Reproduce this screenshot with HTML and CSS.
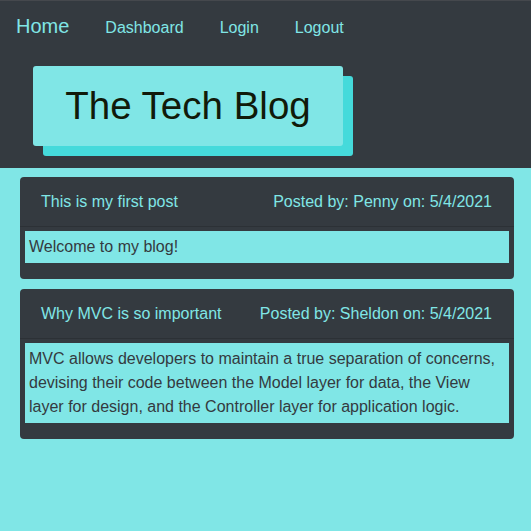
FILE: index.html
```html
<!DOCTYPE html>
<html lang="en">
<head>
<meta charset="utf-8">
<title>The Tech Blog</title>
<link rel="stylesheet" href="styles.css">
</head>
<body>
<header class="site-header">
  <nav class="nav">
    <a class="brand" href="#">Home</a>
    <a class="nav-link" href="#">Dashboard</a>
    <a class="nav-link" href="#">Login</a>
    <a class="nav-link" href="#">Logout</a>
  </nav>
  <div class="title-wrap">
    <h1 class="title">The Tech Blog</h1>
  </div>
</header>
<main class="posts">
  <article class="card">
    <div class="card-header">
      <span>This is my first post</span>
      <span>Posted by: Penny on: 5/4/2021</span>
    </div>
    <div class="card-body">
      <p class="content">Welcome to my blog!</p>
    </div>
  </article>
  <article class="card">
    <div class="card-header">
      <span>Why MVC is so important</span>
      <span>Posted by: Sheldon on: 5/4/2021</span>
    </div>
    <div class="card-body">
      <p class="content">MVC allows developers to maintain a true separation of concerns, devising their code between the Model layer for data, the View layer for design, and the Controller layer for application logic.</p>
    </div>
  </article>
</main>
</body>
</html>
```
FILE: styles.css
```css
* { box-sizing: border-box; }
html, body {
  margin: 0;
  padding: 0;
  background: #80e6e6;
  font-family: "Liberation Sans", Arial, sans-serif;
}
.site-header {
  background: #343a40;
  border-top: 1px solid #45484d;
  height: 168px;
  padding: 0;
}
.nav {
  display: flex;
  align-items: center;
  gap: 36px;
  padding: 0 16px;
  height: 51px;
}
.nav a {
  color: #80e6e6;
  text-decoration: none;
}
.brand {
  font-size: 20px;
}
.nav-link {
  font-size: 16px;
  padding-top: 2px;
}
.title-wrap {
  padding: 14px 0 0 33px;
}
.title {
  display: inline-block;
  margin: 0;
  width: 310px;
  height: 80px;
  line-height: 80px;
  text-align: center;
  font-size: 38.5px;
  font-weight: normal;
  color: #111a0a;
  background: #80e6e6;
  border-radius: 3px;
  box-shadow: 10px 10px 0 0 #45dadb;
}
.posts {
  display: flex;
  flex-direction: column;
  gap: 10px;
  padding: 9px 17px 0 20px;
}
.card {
  background: #343a40;
  border-radius: 4px;
}
.card-header {
  display: flex;
  justify-content: space-between;
  padding: 13px 22px 12px 21px;
  line-height: 24px;
  font-size: 16px;
  color: #80e6e6;
  border-bottom: 1px solid #2c3136;
}
.card-body {
  padding: 4px 5px 16px;
}
.content {
  margin: 0;
  padding: 4px;
  background: #80e6e6;
  color: #343a40;
  font-size: 16px;
  line-height: 24px;
}
```
